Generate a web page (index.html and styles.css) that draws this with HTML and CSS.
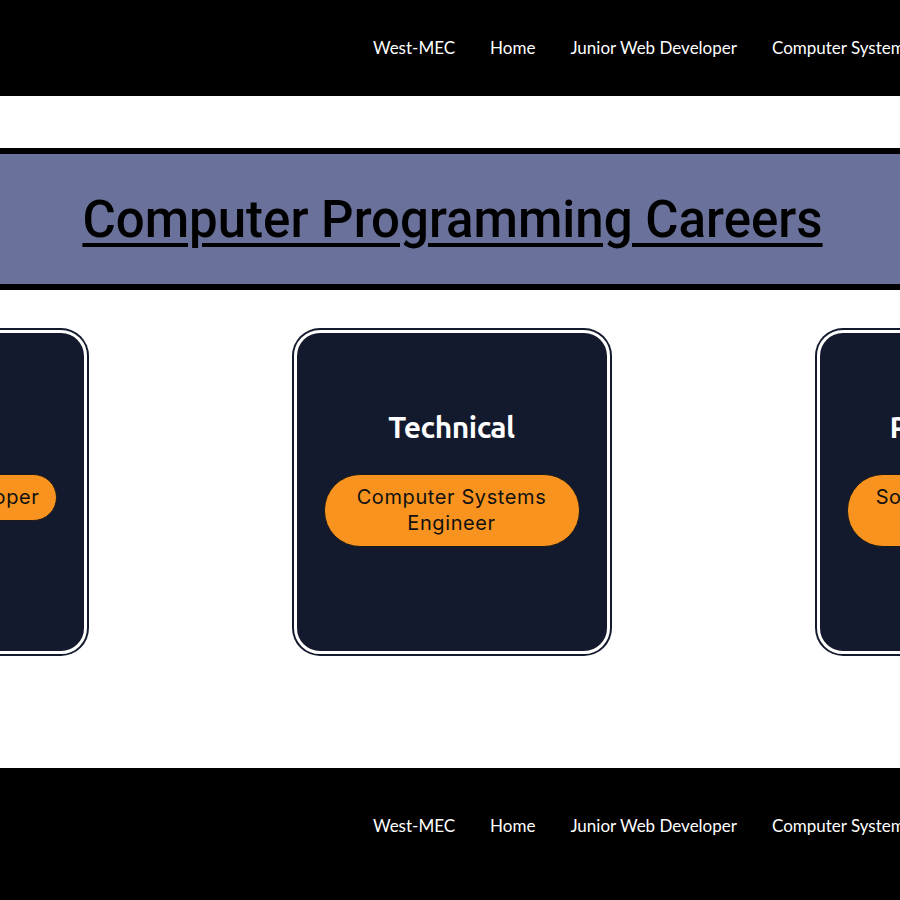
FILE: index.html
```html
<!DOCTYPE html>
<html lang="en">
<head>
<meta charset="utf-8">
<title>Computer Programming Careers</title>
<link rel="stylesheet" href="styles.css">
</head>
<body>
<header class="site-bar">
  <nav class="nav">
    <a class="nav-link" href="#">West-MEC</a>
    <a class="nav-link" href="#">Home</a>
    <a class="nav-link" href="#">Junior Web Developer</a>
    <a class="nav-link" href="#">Computer Systems Engineer</a>
    <a class="nav-link" href="#">Software Developer</a>
  </nav>
</header>
<main class="main">
  <section class="banner">
    <h1 class="banner-title">Computer Programming Careers</h1>
  </section>
  <section class="cards">
    <div class="card">
      <h2 class="card-title">Beginner</h2>
      <a class="pill" href="#">Junior Web Developer</a>
    </div>
    <div class="card">
      <h2 class="card-title">Technical</h2>
      <a class="pill" href="#">Computer Systems Engineer</a>
    </div>
    <div class="card">
      <h2 class="card-title">Professional</h2>
      <a class="pill" href="#">Software Developer Engineer</a>
    </div>
  </section>
</main>
<footer class="site-bar site-bar--footer">
  <nav class="nav">
    <a class="nav-link" href="#">West-MEC</a>
    <a class="nav-link" href="#">Home</a>
    <a class="nav-link" href="#">Junior Web Developer</a>
    <a class="nav-link" href="#">Computer Systems Engineer</a>
    <a class="nav-link" href="#">Software Developer</a>
  </nav>
</footer>
</body>
</html>
```
FILE: styles.css
```css
html, body {
  margin: 0;
  padding: 0;
  overflow: hidden;
}
body {
  background: #ffffff;
  width: 900px;
}
.site-bar {
  background: #000000;
  height: 96px;
  display: flex;
  align-items: center;
  overflow: hidden;
}
.site-bar--footer {
  height: 132px;
  align-items: flex-start;
  box-sizing: border-box;
  padding-top: 47px;
}
.nav {
  display: flex;
  flex-wrap: nowrap;
  gap: 35px;
  padding-left: 373px;
  white-space: nowrap;
  padding-bottom: 2px;
}
.nav-link {
  font-family: Lato, "Liberation Sans", sans-serif;
  font-size: 17px;
  color: #ffffff;
  text-decoration: none;
}
.main {
  padding-top: 52px;
  padding-bottom: 112px;
}
.banner {
  background: #6a729b;
  border-top: 6px solid #000;
  border-bottom: 6px solid #000;
  height: 130px;
  display: flex;
  align-items: center;
  justify-content: center;
  padding-left: 5px;
}
.banner-title {
  margin: 0;
  font-family: Roboto, "Liberation Sans", sans-serif;
  font-weight: 500;
  font-size: 51px;
  color: #000;
  text-decoration: underline;
  text-decoration-thickness: 4px;
  text-underline-offset: 6px;
}
.cards {
  margin-top: 38px;
  display: flex;
  justify-content: center;
  gap: 203px;
  padding-left: 3px;
}
.card {
  flex: 0 0 auto;
  box-sizing: border-box;
  width: 316px;
  height: 324px;
  margin: 2px;
  background: #141a2e;
  border: 3px solid #ffffff;
  box-shadow: 0 0 0 2px #141a2e;
  border-radius: 26px;
  display: flex;
  flex-direction: column;
  align-items: center;
  padding-top: 77px;
}
.card-title {
  margin: 0;
  font-family: Ubuntu, "Open Sans", sans-serif;
  font-weight: 700;
  font-size: 30px;
  color: #ffffff;
  letter-spacing: -0.5px;
}
.pill {
  margin-top: 30px;
  box-sizing: border-box;
  width: 256px;
  padding: 9px 16px 10px;
  background: #f7931e;
  border: 1px solid #1a1a1a;
  border-radius: 36px;
  font-family: Inter, "Noto Sans", sans-serif;
  font-size: 20px;
  line-height: 26px;
  letter-spacing: 0.6px;
  color: #111;
  text-align: center;
  text-decoration: none;
}
```
